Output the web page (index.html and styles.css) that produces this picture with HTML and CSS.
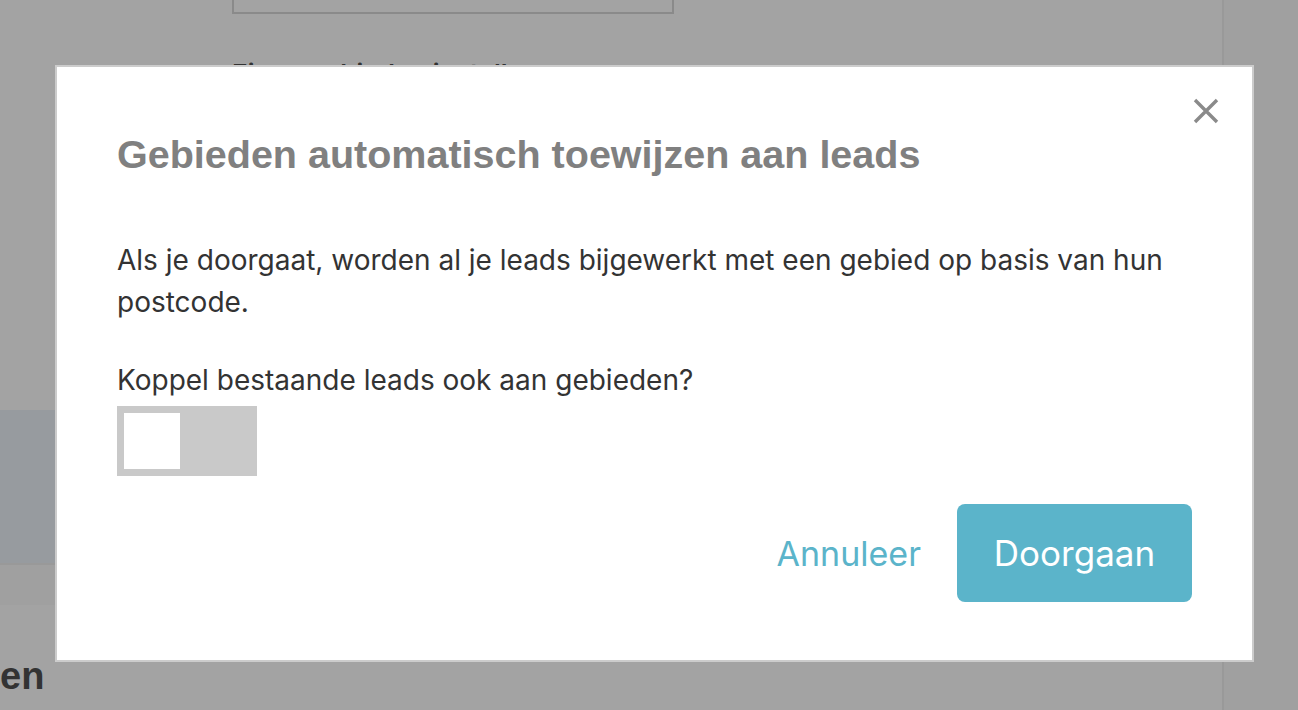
FILE: index.html
```html
<!DOCTYPE html>
<html lang="nl">
<head>
    <meta charset="UTF-8">
    <meta name="viewport" content="width=device-width, initial-scale=1.0">
    <title>Gebieden</title>
    <link rel="stylesheet" href="styles.css">
</head>
<body>
    <div class="page">
        <div class="main">
            <div class="field-box"></div>
            <div class="field-label">Eigen gebieden instellen</div>
            <div class="panel"></div>
            <div class="panel-bar"></div>
            <h2 class="section-title">en</h2>
        </div>
        <div class="sidebar"></div>
    </div>

    <div class="backdrop">
        <div class="modal">
            <button class="modal-close" aria-label="Sluiten">
                <svg width="26" height="26" viewBox="0 0 26 26">
                    <path d="M2 2 L24 24 M24 2 L2 24" stroke="#8a8a8a" stroke-width="3.4" fill="none"/>
                </svg>
            </button>
            <h1 class="modal-title">Gebieden automatisch toewijzen aan leads</h1>
            <p class="modal-text">Als je doorgaat, worden al je leads bijgewerkt met een gebied op basis van hun postcode.</p>
            <label class="toggle-label">Koppel bestaande leads ook aan gebieden?</label>
            <div class="toggle"><span class="toggle-knob"></span></div>
            <div class="modal-actions">
                <button class="btn-link">Annuleer</button>
                <button class="btn-primary">Doorgaan</button>
            </div>
        </div>
    </div>
</body>
</html>
```

FILE: styles.css
```css
body {
    margin: 0;
    padding: 0;
    font-family: 'Inter', 'Noto Sans', sans-serif;
    background: #a3a3a3;
    overflow: hidden;
}
.page {
    display: flex;
    height: 710px;
}
.main {
    flex: 1;
}
.sidebar {
    width: 74px;
    border-left: 2px solid #999999;
    background: #a0a0a0;
}
.field-box {
    margin-left: 232px;
    width: 438px;
    height: 12px;
    border: 2px solid #8a8a8a;
    border-top: none;
}
.field-label {
    margin: 44px 0 0 232px;
    font-size: 26px;
    font-weight: 600;
    color: #333;
}
.panel {
    margin-top: 321px;
    height: 153px;
    background: #979b9f;
    border-bottom: 2px solid #999999;
}
.panel-bar {
    height: 40px;
    background: #a0a0a0;
}
.section-title {
    margin: 50px 0 0;
    font-size: 38px;
    font-weight: 700;
    color: #333;
    font-family: 'Liberation Sans', sans-serif;
}
.backdrop {
    position: fixed;
    top: 0;
    left: 0;
    right: 0;
    bottom: 0;
}
.modal {
    position: absolute;
    left: 55px;
    top: 65px;
    width: 1075px;
    height: 593px;
    background: #fff;
    border: 2px solid #cccccc;
    padding: 0 60px;
    display: flex;
    flex-direction: column;
}
.modal-close {
    position: absolute;
    top: 31px;
    right: 33px;
    background: none;
    border: none;
    padding: 0;
    cursor: pointer;
}
.modal-title {
    margin: 63px 0 0;
    font-family: 'Liberation Sans', Arial, sans-serif;
    font-size: 39.5px;
    font-weight: 700;
    color: #808080;
    line-height: 48px;
}
.modal-text {
    margin: 61px 0 0;
    font-size: 28px;
    line-height: 42px;
    color: #333;
}
.toggle-label {
    margin-top: 39px;
    font-size: 28px;
    line-height: 36px;
    color: #333;
}
.toggle {
    margin-top: 8px;
    width: 126px;
    height: 56px;
    padding: 7px;
    background: #c9c9c9;
}
.toggle-knob {
    display: block;
    width: 56px;
    height: 56px;
    background: #fff;
}
.modal-actions {
    margin-top: 28px;
    display: flex;
    justify-content: flex-end;
    align-items: center;
    gap: 36px;
}
.btn-link {
    background: none;
    border: none;
    padding: 0;
    font-family: inherit;
    font-size: 34px;
    color: #5bb4ca;
    cursor: pointer;
}
.btn-primary {
    width: 235px;
    height: 98px;
    background: #5bb4ca;
    color: #fff;
    border: none;
    border-radius: 8px;
    font-family: inherit;
    font-size: 35px;
    cursor: pointer;
}
```
